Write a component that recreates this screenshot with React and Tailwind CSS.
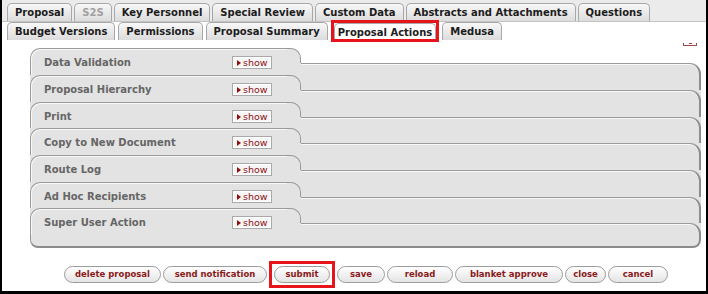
const topTabs = [
    { label: "Proposal" },
    { label: "S2S", dim: true },
    { label: "Key Personnel" },
    { label: "Special Review" },
    { label: "Custom Data" },
    { label: "Abstracts and Attachments" },
    { label: "Questions" },
];

const sections = [
    { title: "Data Validation", h: "h-[27px]" },
    { title: "Proposal Hierarchy", h: "h-[27px]" },
    { title: "Print", h: "h-[26px]" },
    { title: "Copy to New Document", h: "h-[27px]" },
    { title: "Route Log", h: "h-[27px]" },
    { title: "Ad Hoc Recipients", h: "h-[26px]" },
    { title: "Super User Action", h: "h-[27px]" },
];

const buttons = [
    { label: "delete proposal", w: "w-[97px]" },
    { label: "send notification", w: "w-[104px]" },
    { label: "submit", w: "w-[56px]", boxed: true },
    { label: "save", w: "w-[48px]" },
    { label: "reload", w: "w-[66px]" },
    { label: "blanket approve", w: "w-[108px]" },
    { label: "close", w: "w-[41px]" },
    { label: "cancel", w: "w-[60px]" },
];

function Tab({ label, dim, active, h = "h-[18px]", px = "px-[7px]" }) {
    return (
        <div
            className={`${h} ${px} rounded-t-[5px] border border-b-0 border-[#a8a8a8] text-[10px] font-bold leading-[17px] whitespace-nowrap ${
                active ? "bg-white" : "bg-linear-to-b from-[#f8f8f8] to-[#dcdcdc]"
            } ${dim ? "text-[#a0a0a0]" : "text-[#1c1c1c]"}`}
        >
            {label}
        </div>
    );
}

function ShowButton() {
    return (
        <div className="w-[40px] h-[13px] border border-[#a9a9a9] bg-[#f6f6f6] shadow-[inset_0_0_0_1px_#fff] flex items-center pl-[4px] gap-[2px]">
            <span className="w-0 h-0 border-y-[3px] border-y-transparent border-l-[4px] border-l-[#8b1010]" />
            <span className="text-[9.5px] leading-[11px] text-[#8b1010]">show</span>
        </div>
    );
}

function Section({ title, h, first }) {
    return (
        <div className={`flex ${h} ${first ? "" : "bg-[#e3e3e3]"}`}>
            {/* left tab */}
            <div className="w-[257px] bg-[#e3e3e3] border-t border-l border-[#9a9a9a] rounded-tl-[10px] shadow-[inset_1px_1px_0_#f8f8f8] flex items-start pt-[7px] pl-[13px]">
                <div className="w-[188px] text-[10px] leading-[13px] font-bold text-[#666]">{title}</div>
                <ShowButton />
            </div>
            {/* curve step */}
            <div className="w-[14px] flex flex-col">
                <div className="h-[15px] bg-[#e3e3e3] border-t border-r border-[#9a9a9a] rounded-tr-[10px]" />
                <div className="flex-1 bg-[#e3e3e3]" />
            </div>
            {/* right part */}
            <div className="flex-1 flex flex-col">
                <div className={`h-[15px] ${first ? "" : "border-r-2 border-[#8c8c8c]"}`} />
                <div className="flex-1 bg-[#e3e3e3] border-t border-[#9a9a9a] border-r-2 border-r-[#8c8c8c] rounded-tr-[11px] shadow-[inset_0_1px_0_#f8f8f8]" />
            </div>
        </div>
    );
}

export default function App() {
    return (
        <div className="w-[708px] h-[294px] box-border overflow-hidden bg-white border-l-2 border-r-2 border-b-[3px] border-black font-['DejaVu_Sans',sans-serif]">
            {/* first tab row */}
            <div className="h-[22px] pt-[4px] pl-[5px] bg-[#ebebeb] border-b border-[#c4c4c4] flex items-end gap-[2px]">
                {topTabs.map((t) => (
                    <Tab key={t.label} label={t.label} dim={t.dim} />
                ))}
            </div>

            {/* second tab row */}
            <div className="h-[19px] pl-[5px] flex items-start gap-[3px]">
                <Tab label="Budget Versions" />
                <Tab label="Permissions" />
                <Tab label="Proposal Summary" />
                <div className="-mt-[2px] border-[3px] border-[#e8141b] relative z-10">
                    <Tab label="Proposal Actions" active h="h-[16px]" px="px-[3px]" />
                </div>
                <Tab label="Medusa" />
            </div>

            {/* expand all marker */}
            <div className="h-[7px] pt-[2px] flex justify-end items-start pr-[9px]">
                <div className="w-[14px] h-[3px] border-x border-b border-[#a34646] flex justify-center">
                    <span className="w-[3px] h-[1px] bg-[#a34646]" />
                </div>
            </div>

            {/* action sections */}
            <div className="ml-[28px] w-[671px]">
                {sections.map((s, i) => (
                    <Section key={s.title} title={s.title} h={s.h} first={i === 0} />
                ))}
                <div className="h-[13px] bg-[#e3e3e3] border-l border-[#9a9a9a] border-r-2 border-r-[#8c8c8c] border-b-2 border-b-[#8c8c8c] rounded-b-[8px]" />
            </div>

            {/* buttons */}
            <div className="mt-[13px] ml-[62px] flex items-center gap-[2px]">
                {buttons.map((b) => {
                    const btn = (
                        <div
                            key={b.label}
                            className={`${b.w} h-[17px] rounded-full border border-[#9c9c9c] bg-linear-to-b from-white to-[#e4e4e4] text-center text-[8.5px] leading-[15px] font-bold text-[#8a1a1a] whitespace-nowrap`}
                        >
                            {b.label}
                        </div>
                    );
                    return b.boxed ? (
                        <div key={b.label} className="border-[3px] border-[#e8141b] px-[2px] py-[2px]">
                            {btn}
                        </div>
                    ) : (
                        btn
                    );
                })}
            </div>
        </div>
    );
}
